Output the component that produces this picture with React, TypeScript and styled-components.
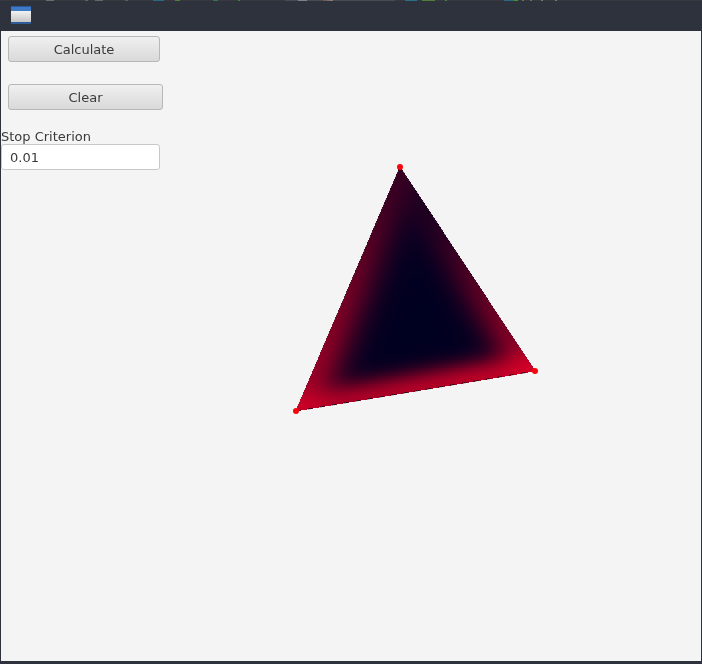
import React, { useEffect, useRef } from "react";
import styled, { createGlobalStyle } from "styled-components";

const Global = createGlobalStyle`
  html, body { margin: 0; padding: 0; background: #2d323d; }
  #root { width: 702px; height: 664px; }
`;

const Win = styled.div`
  width: 702px;
  height: 664px;
  display: flex;
  flex-direction: column;
  background: #2d323d;
  font-family: "DejaVu Sans", sans-serif;
  font-size: 13px;
  color: #3a3a3a;
  overflow: hidden;
`;

const TopStrip = styled.div`
  height: 1px;
  display: flex;
  background: #37393f;
`;

const Fragment = styled.span<{ $w: number; $c: string }>`
  width: ${(p) => p.$w}px;
  flex: none;
  background: ${(p) => p.$c};
`;

const TitleBar = styled.div`
  height: 30px;
  display: flex;
  align-items: center;
  padding-left: 11px;
  padding-bottom: 3px;
  box-sizing: border-box;
  background: #2d323d;
`;

const Body = styled.div`
  height: 630px;
  margin: 0 1px 3px 1px;
  display: flex;
  background: #f4f4f4;
`;

const Sidebar = styled.div`
  width: 163px;
  flex: none;
  display: flex;
  flex-direction: column;
  align-items: flex-start;
  will-change: transform;
`;

const Button = styled.button<{ $w: number; $mt: number }>`
  width: ${(p) => p.$w}px;
  height: 26px;
  margin: ${(p) => p.$mt}px 0 0 7px;
  padding: 0;
  box-sizing: border-box;
  border: 1px solid #b8b8b8;
  border-radius: 3px;
  background: linear-gradient(#f0f0f0, #d9d9d9);
  font: inherit;
  color: #3a3a3a;
`;

const FieldLabel = styled.label`
  margin-top: 19px;
  height: 15px;
  line-height: 15px;
  white-space: nowrap;
`;

const Field = styled.input`
  width: 159px;
  height: 26px;
  box-sizing: border-box;
  border: 1px solid #c8c8c8;
  border-radius: 3px;
  background: #fff;
  padding: 0 8px;
  font: inherit;
  color: #3a3a3a;
  outline: none;
`;

const Stage = styled.div`
  flex: 1;
  display: flex;
`;

const Plot = styled.canvas`
  display: block;
  width: 537px;
  height: 630px;
`;

const base = "#37393f";
const strip: [number, string][] = [
  [46, base], [8, "#6a6c6e"], [31, base], [3, "#5f6163"], [7, base], [8, "#646668"],
  [22, base], [3, "#5a5c5e"], [25, base], [11, "#2a6a85"], [11, base], [5, "#4d8038"],
  [33, base], [5, "#357550"], [20, base], [2, "#417c44"], [45, base], [13, "#4a4c52"],
  [9, "#7a848c"], [16, "#4a4c52"], [4, "#6a5c60"], [3, "#807070"], [3, "#907a70"], [62, "#4a4c52"],
  [10, base], [12, "#2a7088"], [5, base], [13, "#4d803c"], [10, base], [2, "#4d803c"],
  [57, base], [10, "#2a6a85"], [4, "#4d9036"], [4, base], [2, "#557a5a"], [6, base],
  [2, "#4d805a"], [9, base], [2, "#688068"], [12, base], [2, "#688068"],
];

const OX = 164;
const OY = 31;
const A = { x: 400, y: 167 };
const B = { x: 296, y: 411 };
const C = { x: 535, y: 371 };

type P = { x: number; y: number };

const dist = (p: P, q: P, x: number, y: number) => {
  const dx = q.x - p.x;
  const dy = q.y - p.y;
  return Math.abs(dy * (x - p.x) - dx * (y - p.y)) / Math.hypot(dx, dy);
};

const side = (p: P, q: P, x: number, y: number) =>
  ((q.x - p.x) * (y - p.y) - (q.y - p.y) * (x - p.x)) / Math.hypot(q.x - p.x, q.y - p.y);

const heat = (x: number, y: number) => {
  const qx = Math.floor(x / 2) * 2 + 1;
  const qy = Math.floor(y / 2) * 2 + 1;
  const dl = dist(A, B, qx, qy);
  const dr = dist(A, C, qx, qy);
  const db = dist(B, C, qx, qy);
  const t = Math.min(1, Math.max(0, (qy - A.y) / (395 - A.y)));
  const ampL = 0.1 + 0.46 * Math.pow(t, 1.2);
  const ampR = 0.03 + 0.62 * Math.pow(t, 1.8);
  const cx = Math.min(1, Math.max(0, (qx - B.x) / (C.x - B.x)));
  const ampB = 0.6 + 0.3 * cx;
  const l = ampL * Math.exp(-Math.pow(dl / 23, 1.7));
  const r = ampR * Math.exp(-Math.pow(dr / 20, 1.7));
  const b = ampB * Math.exp(-Math.pow(db / 16, 1.8));
  return 0.96 * (1 - Math.exp(-2.1 * (l + r + b)));
};

function drawPlot(cv: HTMLCanvasElement) {
  const ctx = cv.getContext("2d");
  if (!ctx) return;
  const img = ctx.createImageData(cv.width, cv.height);
  for (let y = 160; y < 420; y++) {
    for (let x = 290; x < 540; x++) {
      const s1 = side(A, C, x + 0.5, y + 0.5);
      const s2 = side(C, B, x + 0.5, y + 0.5);
      const s3 = side(B, A, x + 0.5, y + 0.5);
      if (s1 < -0.4 || s2 < -0.4 || s3 < -0.4) continue;
      const v = heat(x, y);
      const i = ((y - OY) * cv.width + (x - OX)) * 4;
      img.data[i] = 232 * v;
      img.data[i + 1] = 0;
      img.data[i + 2] = 32 + 8 * v;
      img.data[i + 3] = 255;
    }
  }
  ctx.putImageData(img, 0, 0);
  ctx.translate(-OX, -OY);
  ctx.lineWidth = 1;
  ctx.setLineDash([5, 7]);
  ctx.strokeStyle = "rgba(15,15,25,0.85)";
  ctx.beginPath();
  ctx.moveTo(B.x, B.y);
  ctx.lineTo(C.x, C.y);
  ctx.stroke();
  ctx.setLineDash([2, 3]);
  ctx.strokeStyle = "rgba(70,70,80,0.7)";
  ctx.beginPath();
  ctx.moveTo(A.x, A.y);
  ctx.lineTo(B.x, B.y);
  ctx.moveTo(A.x, A.y);
  ctx.lineTo(C.x, C.y);
  ctx.stroke();
  ctx.setLineDash([]);
  ctx.fillStyle = "#f5060c";
  for (const p of [A, B, C]) {
    ctx.beginPath();
    ctx.arc(p.x, p.y, 3, 0, Math.PI * 2);
    ctx.fill();
  }
}

export default function App() {
  const ref = useRef<HTMLCanvasElement>(null);
  useEffect(() => {
    if (ref.current) drawPlot(ref.current);
  }, []);
  return (
    <Win>
      <Global />
      <TopStrip>
        {strip.map(([w, c], i) => (
          <Fragment key={i} $w={w} $c={c} />
        ))}
      </TopStrip>
      <TitleBar>
        <svg width="20" height="18" viewBox="0 0 20 18">
          <defs>
            <linearGradient id="winBody" x1="0" y1="0" x2="0" y2="1">
              <stop offset="0" stopColor="#f2f2f2" />
              <stop offset="1" stopColor="#c6c6c6" />
            </linearGradient>
          </defs>
          <rect x="0" y="0" width="20" height="18" fill="#3f78c4" />
          <rect x="0" y="0" width="20" height="1" fill="#2f5a98" />
          <rect x="0" y="5" width="20" height="11" fill="url(#winBody)" />
          <rect x="0" y="16" width="20" height="2" fill="#2f5a98" />
        </svg>
      </TitleBar>
      <Body>
        <Sidebar>
          <Button $w={152} $mt={5}>Calculate</Button>
          <Button $w={155} $mt={22}>Clear</Button>
          <FieldLabel>Stop Criterion</FieldLabel>
          <Field defaultValue="0.01" />
        </Sidebar>
        <Stage>
          <Plot ref={ref} width={537} height={630} />
        </Stage>
      </Body>
    </Win>
  );
}
